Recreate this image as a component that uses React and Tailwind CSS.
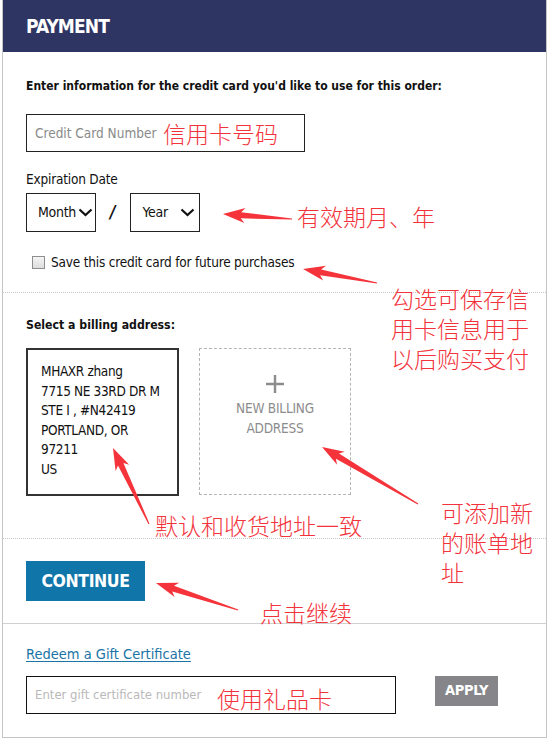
import React from 'react';

const arrows = [
  // [tailX, tailY, tipX, tipY]
  [292, 219, 223, 214],
  [377, 283, 303, 269],
  [149, 524, 113, 448],
  [418, 504, 322, 447],
  [238, 610, 156, 583],
];

const arrowPoints = (x1, y1, x2, y2) => {
  const dx = x1 - x2;
  const dy = y1 - y2;
  const len = Math.sqrt(dx * dx + dy * dy);
  const ux = dx / len;
  const uy = dy / len;
  const px = -uy;
  const py = ux;
  // local frame: u from tip toward tail, v perpendicular
  const pt = (u, v) => `${(x2 + ux * u + px * v).toFixed(1)},${(y2 + uy * u + py * v).toFixed(1)}`;
  const head = 22;
  return [
    pt(0, 0),
    pt(head, -7.5),
    pt(head - 4, -3),
    pt(len, -0.6),
    pt(len, 0.6),
    pt(head - 4, 3),
    pt(head, 7.5),
  ].join(' ');
};

const Note = ({ className, lines }) => (
  <div className={`absolute font-['Noto_Sans_CJK_SC',sans-serif] font-light text-[23px] text-[#f2333b] whitespace-nowrap ${className}`}>
    {lines.map((l, i) => (
      <div key={i} className="h-[30px] leading-[30px]">{l}</div>
    ))}
  </div>
);

const Chevron = () => (
  <svg width="15" height="9" viewBox="0 0 15 9" className="shrink-0">
    <path d="M1.5 1.5 L7.5 7 L13.5 1.5" fill="none" stroke="#111" strokeWidth="2.2" />
  </svg>
);

const App = () => {
  return (
    <div className="relative w-[548px] h-[739px] bg-white overflow-hidden font-['Liberation_Sans_Narrow','DejaVu_Sans_Condensed',sans-serif] text-[#111]">
      <div className="ml-[2px] w-[545px] border-l border-r border-b border-[#c4c4c4]">
        <div className="h-[52px] bg-[#2e3563] flex items-center pl-[23px]">
          <h1 className="text-white font-bold text-[19px] leading-none tracking-[-0.9px]">PAYMENT</h1>
        </div>

        {/* card info */}
        <div className="pl-[23px] pt-[26px] pb-[21px] border-b border-dotted border-[#c8c8c8]">
          <p className="font-bold text-[12px] leading-[16px]">Enter information for the credit card you'd like to use for this order:</p>
          <div className="mt-[20px] w-[279px] h-[38px] border border-[#222] flex items-center pl-[8px]">
            <span className="text-[13.5px] text-[#8a8a8a]">Credit Card Number</span>
          </div>
          <p className="mt-[18px] text-[13.5px] tracking-[-0.2px] leading-[18px]">Expiration Date</p>
          <div className="mt-[5px] flex items-center">
            <div className="w-[70px] h-[39px] border border-[#222] flex items-center pl-[11px] pr-[2px] gap-[2px]">
              <span className="text-[14px] tracking-[-0.3px]">Month</span>
              <Chevron />
            </div>
            <span className="ml-[14px] mr-[14px] font-bold italic text-[17px]">/</span>
            <div className="w-[70px] h-[39px] border border-[#222] flex items-center pl-[12px] pr-[4px] justify-between">
              <span className="text-[14px] tracking-[-0.3px]">Year</span>
              <Chevron />
            </div>
          </div>
          <div className="mt-[21px] flex items-center h-[18px] pl-[6px]">
            <span className="w-[13px] h-[13px] border border-[#8e8e8e] bg-gradient-to-b from-[#f4f4f4] to-[#dedede]"></span>
            <span className="ml-[6px] text-[13.5px] tracking-[-0.2px]">Save this credit card for future purchases</span>
          </div>
        </div>

        {/* billing address */}
        <div className="pl-[23px] pt-[24px] pb-[42px] border-b border-dotted border-[#c8c8c8]">
          <p className="font-bold text-[12.2px] leading-[16px]">Select a billing address:</p>
          <div className="mt-[15px] flex gap-[20px]">
            <div className="w-[153px] h-[148px] border-2 border-[#333] pl-[13px] pt-[12px] text-[13.5px] tracking-[-0.35px] leading-[19.6px]">
              <div>MHAXR zhang</div>
              <div>7715 NE 33RD DR M</div>
              <div>STE I , #N42419</div>
              <div>PORTLAND, OR</div>
              <div>97211</div>
              <div>US</div>
            </div>
            <div className="w-[152px] h-[147px] border border-dashed border-[#b4b4b4] flex flex-col items-center pt-[26px] text-[#8c8c8c]">
              <svg width="18" height="18" viewBox="0 0 18 18">
                <path d="M9 0 V18 M0 9 H18" stroke="#8c8c8c" strokeWidth="2.4" />
              </svg>
              <div className="mt-[6px] text-[13.5px] tracking-[-0.2px] leading-[19.6px] text-center">NEW BILLING<br />ADDRESS</div>
            </div>
          </div>
        </div>

        {/* continue */}
        <div className="pl-[23px] pt-[22px] pb-[22px] border-b border-[#d0d0d0]">
          <button className="w-[119px] h-[40px] bg-[#1075a8] text-white font-bold text-[17.5px] tracking-[-0.4px] flex items-center justify-center">CONTINUE</button>
        </div>

        {/* gift certificate */}
        <div className="pl-[23px] pt-[22px] pb-[23px]">
          <p className="leading-[16px]">
            <a href="#" className="text-[14.5px] text-[#1a74a6] underline underline-offset-2">Redeem a Gift Certificate</a>
          </p>
          <div className="mt-[14px] flex items-start">
            <div className="w-[370px] h-[38px] border border-[#111] flex items-center pl-[8px]">
              <span className="text-[13px] text-[#b9b9b9]">Enter gift certificate number</span>
            </div>
            <button className="ml-[39px] w-[63px] h-[30px] bg-[#86868a] text-white font-bold text-[14.5px] tracking-[-0.3px] flex items-center justify-center">APPLY</button>
          </div>
        </div>
      </div>

      {/* annotations */}
      <svg className="absolute inset-0 pointer-events-none" width="548" height="739">
        {arrows.map((a, i) => (
          <polygon key={i} points={arrowPoints(...a)} fill="#f5333a" />
        ))}
      </svg>
      <Note className="left-[163px] top-[118px]" lines={['信用卡号码']} />
      <Note className="left-[297px] top-[201px]" lines={['有效期月、年']} />
      <Note className="left-[391px] top-[283px]" lines={['勾选可保存信', '用卡信息用于', '以后购买支付']} />
      <Note className="left-[155px] top-[510px]" lines={['默认和收货地址一致']} />
      <Note className="left-[441px] top-[497px]" lines={['可添加新', '的账单地', '址']} />
      <Note className="left-[260px] top-[597px]" lines={['点击继续']} />
      <Note className="left-[217px] top-[683px]" lines={['使用礼品卡']} />
    </div>
  );
};

export default App;
